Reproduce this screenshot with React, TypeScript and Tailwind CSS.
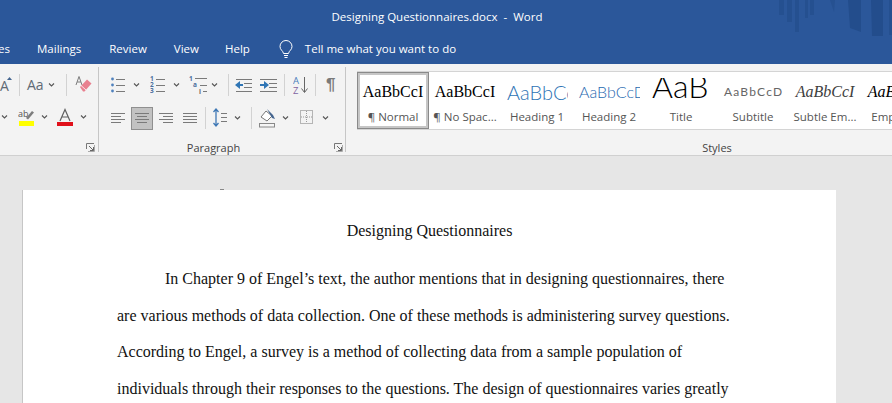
import type { ReactNode } from "react";

const GRAY = "#7a7a7a";
const BLUE = "#4f81bd";

function Ico({ w, h = 20, ml = 0, children }: { w: number; h?: number; ml?: number; children: ReactNode }) {
  return (
    <svg width={w} height={h} viewBox={`0 0 ${w} ${h}`} style={{ marginLeft: ml }} className="shrink-0" fill="none">
      {children}
    </svg>
  );
}

function Chev({ ml }: { ml: number }) {
  return (
    <Ico w={7} ml={ml}>
      <path d="M1 8.5l2.5 2.5L6 8.5" stroke="#555" strokeWidth="1.1" />
    </Ico>
  );
}

function Sep({ ml, h = 22 }: { ml: number; h?: number }) {
  return <div className="w-px shrink-0 bg-[#d2d2d2]" style={{ marginLeft: ml, height: h }} />;
}

function Lines({ w, ml, align }: { w: number; ml: number; align: "left" | "center" | "right" | "justify" }) {
  const rows = [5, 8, 11, 14];
  const short = w - 4;
  return (
    <Ico w={w} ml={ml}>
      {rows.map((y, i) => {
        const len = align === "justify" || i % 2 === 0 ? w : short;
        const x = align === "left" || align === "justify" ? 0 : align === "center" ? (w - len) / 2 : w - len;
        return <path key={y} d={`M${x} ${y + 0.5}h${len}`} stroke={GRAY} strokeWidth="1" />;
      })}
    </Ico>
  );
}

function Launcher() {
  return (
    <svg width="9" height="9" viewBox="0 0 9 9" fill="none" className="shrink-0">
      <path d="M.5 6V.5H8" stroke="#777" />
      <path d="M3 3l4.5 4.5M7.5 4v3.5H4" stroke="#666" />
      <path d="M8.5 2v6.5H2" stroke="#aaa" />
    </svg>
  );
}

function FontGroup() {
  return (
    <div className="w-[98px] shrink-0 flex flex-col overflow-hidden relative mb-[3px]">
      <div className="flex items-center h-[20px] mt-[11px]">
        <div className="w-[12px] shrink-0 relative h-[20px]">
          <span className="absolute left-0 top-[2px] text-[14px] leading-[18px] text-[#5f6a75]">A</span>
          <svg width="5" height="3" viewBox="0 0 5 3" className="absolute left-[7px] top-[2px]">
            <path d="M0 3l2.5-3L5 3z" fill="#44658f" />
          </svg>
        </div>
        <Sep ml={7} />
        <span className="ml-[7px] w-[16px] text-[14px] leading-[20px] text-[#5f6a75] shrink-0">Aa</span>
        <Chev ml={5} />
        <Sep ml={11} />
        <Ico w={17} ml={8}>
          <path d="M1 10L4 1.5 7 10M2.2 7h3.6" stroke="#7b7b7b" strokeWidth="1" />
          <path d="M5 12l7-7.5 4.5 4L9.5 16.5H8z" fill="#e8808f" />
          <path d="M6 10.5l5 4.5" stroke="#fff" strokeWidth="0.8" />
        </Ico>
      </div>
      <div className="flex items-center h-[20px] mt-[12px]">
        <Chev ml={1} />
        <Ico w={17} ml={10}>
          <text x="0" y="10" fontSize="9" fill="#555" fontFamily="Open Sans, sans-serif">ab</text>
          <path d="M8 11l6-7 2 1.5-6 7z" fill="#7d7d7d" />
          <rect x="1" y="14" width="15" height="5" fill="#ffff00" />
        </Ico>
        <Chev ml={6} />
        <Ico w={16} ml={9}>
          <path d="M3 14L8 2.5 13 14M4.8 10h6.4" stroke="#5f5f5f" strokeWidth="1.2" />
          <rect x="0" y="15" width="16" height="4" fill="#e0101a" />
        </Ico>
        <Chev ml={7} />
      </div>
      <div className="absolute right-[3px] bottom-0">
        <Launcher />
      </div>
    </div>
  );
}

function ParagraphGroup() {
  return (
    <div className="w-[248px] shrink-0 flex flex-col border-l border-r border-[#c6c6c6] relative mt-[3px] mb-[3px]">
      <div className="flex items-center h-[20px] mt-[8px]">
        <Ico w={14} ml={12}>
          {[4, 10, 16].map((y) => (
            <g key={y}>
              <circle cx="1.5" cy={y} r="1.4" fill={BLUE} />
              <path d={`M5 ${y + 0.5}h9`} stroke={GRAY} />
            </g>
          ))}
        </Ico>
        <Chev ml={8} />
        <Ico w={15} ml={10}>
          {[["1", 6], ["2", 12], ["3", 18]].map(([n, y]) => (
            <text key={n} x="0" y={y} fontSize="6.5" fontWeight="700" fill="#4a6f9d" fontFamily="Open Sans, sans-serif">{n}</text>
          ))}
          {[4, 10, 16].map((y) => (
            <path key={y} d={`M6 ${y + 0.5}h9`} stroke={GRAY} />
          ))}
        </Ico>
        <Chev ml={8} />
        <Ico w={18} ml={9}>
          <text x="0" y="6" fontSize="6.5" fontWeight="700" fill="#4a6f9d" fontFamily="Open Sans, sans-serif">1</text>
          <text x="4" y="12" fontSize="6.5" fontWeight="700" fill="#4a6f9d" fontFamily="Open Sans, sans-serif">a</text>
          <text x="10" y="19" fontSize="6.5" fontWeight="700" fill="#666" fontFamily="Open Sans, sans-serif">i</text>
          <path d="M6 3.5h12M11 10.5h7M14 16.5h4" stroke={GRAY} />
        </Ico>
        <Chev ml={4} />
        <Sep ml={10} />
        <Ico w={17} ml={6}>
          <path d="M0 10l5-4v8z" fill="#2f75b5" />
          <path d="M4 10h4" stroke="#2f75b5" strokeWidth="2" />
          <path d="M1 4.5h16M9 8.5h8M9 12.5h8M1 16.5h16" stroke={GRAY} />
        </Ico>
        <Ico w={17} ml={8}>
          <path d="M9 10L4 6v8z" fill="#2f75b5" />
          <path d="M0 10h5" stroke="#2f75b5" strokeWidth="2" />
          <path d="M0 4.5h17M9 8.5h8M9 12.5h8M0 16.5h17" stroke={GRAY} />
        </Ico>
        <Sep ml={7} />
        <Ico w={15} ml={8}>
          <text x="0" y="9" fontSize="9.5" fill="#4a7ebb" fontFamily="Open Sans, sans-serif">A</text>
          <text x="0" y="19" fontSize="9.5" fill="#8064a2" fontFamily="Open Sans, sans-serif">Z</text>
          <path d="M11.5 2v15M8.5 13.5l3 4 3-4" stroke="#666" />
        </Ico>
        <Sep ml={7} />
        <span className="ml-[10px] w-[10px] text-[17px] leading-[20px] font-bold text-[#7a7a7a] shrink-0 font-['Liberation_Sans',sans-serif]">¶</span>
      </div>
      <div className="flex items-center h-[24px] mt-[11px]">
        <Lines w={14} ml={12} align="left" />
        <div className="ml-[6px] w-[22px] h-[23px] shrink-0 bg-[#c2c2c2] border border-[#8f8f8f] flex items-center justify-center">
          <Lines w={14} ml={0} align="center" />
        </div>
        <Lines w={14} ml={6} align="right" />
        <Lines w={14} ml={10} align="justify" />
        <Sep ml={8} />
        <Ico w={14} ml={7}>
          <path d="M3 1v17M.5 4L3 1l2.5 3M.5 15L3 18l2.5-3" stroke="#3f78b5" strokeWidth="1.3" />
          <path d="M8 5.5h6M8 9.5h6M8 13.5h6" stroke={GRAY} />
        </Ico>
        <Chev ml={7} />
        <Sep ml={10} />
        <Ico w={16} ml={7}>
          <path d="M2 9l5-6 6 5-5 5z" fill="#fff" stroke="#777" />
          <path d="M8 1l6 6 2 4-3-1z" fill="#44658f" />
          <rect x="0.5" y="15.5" width="15" height="3.5" fill="#f5f5f5" stroke="#888" />
        </Ico>
        <Chev ml={7} />
        <Ico w={13} ml={11}>
          <rect x=".5" y="2.5" width="12" height="13" stroke="#777" strokeDasharray="1 1" />
          <path d="M6.5 3v12M1 9h11" stroke="#999" strokeDasharray="1 1" />
        </Ico>
        <Chev ml={9} />
      </div>
      <div className="absolute left-0 right-0 bottom-[-3px] pr-[17px] flex justify-center text-[11px] leading-[14px] text-[#444]">
        Paragraph
      </div>
      <div className="absolute right-[2px] bottom-0">
        <Launcher />
      </div>
    </div>
  );
}

const LATO = "font-['Lato','Open_Sans',sans-serif]";
const SERIF = "font-['Liberation_Serif',serif]";

const STYLES: { label: string; preview: string; cls: string; box: string; para?: boolean }[] = [
  { label: "Normal", preview: "AaBbCcI", cls: `${SERIF} text-[16px] text-black`, box: "h-[34px] justify-center", para: true },
  { label: "No Spac...", preview: "AaBbCcI", cls: `${SERIF} text-[16px] text-black`, box: "h-[34px] justify-center", para: true },
  { label: "Heading 1", preview: "AaBbCcDd", cls: `${LATO} font-light text-[20px] text-[#2e74b5]`, box: "h-[34px] justify-start pl-[1px]" },
  { label: "Heading 2", preview: "AaBbCcDd", cls: `${LATO} font-light text-[16px] text-[#1f69b0]`, box: "h-[34px] justify-start pl-[1px]" },
  { label: "Title", preview: "AaB", cls: `${LATO} font-light text-[32px] text-black -translate-y-[7px]`, box: "mt-[3px] h-[31px] justify-start pl-[2px]" },
  { label: "Subtitle", preview: "AaBbCcD", cls: `${LATO} text-[12px] tracking-[1.2px] text-[#666]`, box: "h-[34px] justify-start pl-[2px]" },
  { label: "Subtle Em...", preview: "AaBbCcI", cls: `${SERIF} italic text-[16px] text-[#404040]`, box: "h-[34px] justify-center" },
  { label: "Emphasis", preview: "AaBbCcI", cls: `${SERIF} italic text-[16px] text-black`, box: "h-[34px] justify-center" },
];

function StylesGroup() {
  return (
    <div className="flex-1 min-w-0 flex flex-col pl-[11px] relative">
      <div className="mt-[7px] h-[59px] bg-white border-y border-[#d4d4d4] flex overflow-hidden">
        {STYLES.map((s, i) => (
          <div
            key={s.label}
            className={`w-[72px] shrink-0 flex flex-col items-center ${i === 0 ? "border-[3px] border-[#c6c6c6] outline outline-1 -outline-offset-1 outline-[#8a8a8a]" : "border-[3px] border-transparent"}`}
          >
            <div className={`w-[62px] overflow-hidden flex items-center ${s.box}`}>
              <span className={`whitespace-nowrap leading-none ${s.cls}`}>{s.preview}</span>
            </div>
            <div className="text-[11.5px] leading-[18px] text-[#555] whitespace-nowrap">
              {s.para && <span className="mr-[3px]">¶</span>}
              {s.label}
            </div>
          </div>
        ))}
      </div>
      <div className="absolute left-[11px] w-[720px] bottom-0 flex justify-center text-[11px] leading-[14px] text-[#444]">
        Styles
      </div>
    </div>
  );
}

const LINES = [
  "are various methods of data collection. One of these methods is administering survey questions.",
  "According to Engel, a survey is a method of collecting data from a sample population of",
  "individuals through their responses to the questions. The design of questionnaires varies greatly",
];

export default function App() {
  return (
    <div className="w-[892px] h-[403px] overflow-hidden flex flex-col bg-[#e6e6e6] font-['Open_Sans',sans-serif]">
      <div className="h-[64px] shrink-0 bg-[#2b579a] text-white flex flex-col relative">
        <svg width="122" height="40" viewBox="0 0 122 40" className="absolute right-0 top-0" fill="#234d8c">
          <path d="M9 0h5v15H9zM17 0h5v22h-5zM25 0h4v32h-4zM35 0h3v18h-3zM40 0h4v15h-4z" opacity=".7" />
          <path d="M60 0h5l-1 12z" opacity=".6" />
          <path d="M78 0h13v32l-11-4zM101 0h12v36h-11z" />
          <path d="M119 0h3v35h-3z" opacity=".7" />
        </svg>
        <div className="h-[37px] shrink-0 flex items-center justify-center text-[11.5px] relative pb-[3px] pr-[18px]">
          <span className="whitespace-pre">Designing Questionnaires.docx  -  Word</span>
        </div>
        <div className="h-[27px] flex items-center text-[11.5px] relative pb-[3px] whitespace-nowrap">
          <span className="w-[10px] overflow-hidden flex justify-end">es</span>
          <span className="ml-[27px]">Mailings</span>
          <span className="ml-[28px]">Review</span>
          <span className="ml-[27px]">View</span>
          <span className="ml-[26px]">Help</span>
          <svg width="14" height="19" viewBox="0 0 14 19" fill="none" className="ml-[29px]">
            <path d="M4.5 13.5C4 10.5 1 10 1 6.5a6 6 0 0 1 12 0c0 3.5-3 4-3.5 7z" stroke="#fff" />
            <path d="M5 15.5h4M5.5 17.5h3" stroke="#fff" />
          </svg>
          <span className="ml-[12px]">Tell me what you want to do</span>
        </div>
      </div>

      <div className="h-[92px] shrink-0 bg-[#f3f3f3] border-b border-[#d0d0d0] flex">
        <FontGroup />
        <ParagraphGroup />
        <StylesGroup />
      </div>

      <div className="flex-1 min-h-0 pl-[22px] pt-[34px]">
        <div className="w-[814px] h-[300px] bg-white border-l border-[#c6c6c6] relative font-['Liberation_Serif',serif] text-[16px] text-[#111] whitespace-nowrap">
          <div className="absolute left-[197px] top-[-1px] w-[4px] h-px bg-[#888]" />
          <div className="pt-[23px] leading-[36.5px] text-center h-[59px]">Designing Questionnaires</div>
          <div className="pl-[94px] leading-[36.5px] mt-[12px]">
            <div className="pl-[48px]">In Chapter 9 of Engel’s text, the author mentions that in designing questionnaires, there</div>
            {LINES.map((l) => (
              <div key={l}>{l}</div>
            ))}
          </div>
        </div>
      </div>
    </div>
  );
}
